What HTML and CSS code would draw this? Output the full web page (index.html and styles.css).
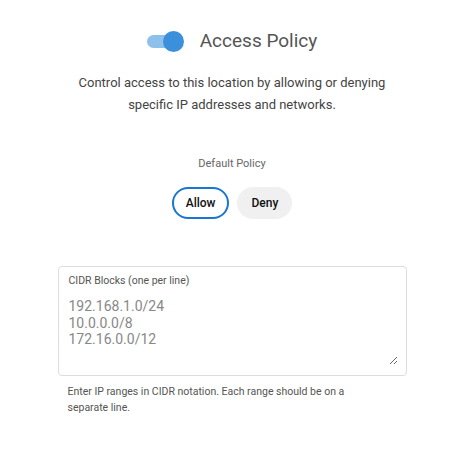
FILE: index.html
```html
<!DOCTYPE html>
<html>
<head>
<meta charset="utf-8">
<link rel="stylesheet" href="styles.css">
</head>
<body>
<div class="page">
  <div class="header">
    <span class="switch"><span class="track"></span><span class="thumb"></span></span>
    <h1 class="title">Access Policy</h1>
  </div>
  <p class="desc">Control access to this location by allowing or denying specific IP addresses and networks.</p>
  <div class="policy-label">Default Policy</div>
  <div class="btns">
    <button class="btn btn-active">Allow</button>
    <button class="btn">Deny</button>
  </div>
  <div class="field-wrap">
    <div class="field">
      <label class="field-label" for="cidr">CIDR Blocks (one per line)</label>
      <textarea id="cidr" class="area" rows="4">192.168.1.0/24
10.0.0.0/8
172.16.0.0/12</textarea>
    </div>
    <p class="help">Enter IP ranges in CIDR notation. Each range should be on a separate line.</p>
  </div>
</div>
</body>
</html>
```
FILE: styles.css
```css
html, body {
  margin: 0;
  background: #fff;
}
body {
  font-family: Roboto, "Liberation Sans", sans-serif;
}
.page {
  width: 464px;
  display: flex;
  flex-direction: column;
  align-items: center;
  padding-top: 28px;
}
.header {
  display: flex;
  align-items: center;
  gap: 16px;
  height: 26px;
}
.switch {
  position: relative;
  width: 37px;
  height: 21px;
  display: block;
}
.track {
  position: absolute;
  left: 0;
  top: 4px;
  width: 34px;
  height: 13px;
  border-radius: 7px;
  background: #8ec0ec;
}
.thumb {
  position: absolute;
  left: 16px;
  top: 0;
  width: 21px;
  height: 21px;
  border-radius: 50%;
  background: #3b8fdb;
}
.title {
  margin: 0;
  font-size: 19px;
  font-weight: 400;
  color: #555;
  line-height: 26px;
}
.desc {
  margin: 18px 0 0;
  width: 340px;
  text-align: center;
  font-size: 13px;
  line-height: 22px;
  color: #444;
}
.policy-label {
  margin-top: 41px;
  font-size: 11px;
  line-height: 14px;
  color: #666;
}
.btns {
  margin-top: 16px;
  display: flex;
  gap: 8px;
}
.btn {
  font-family: Roboto, "Liberation Sans", sans-serif;
  font-size: 12px;
  font-weight: 500;
  color: #111;
  height: 32px;
  padding: 0 12px;
  border: 2px solid transparent;
  border-radius: 16px;
  background: #f0f0f0;
}
.btn-active {
  background: #fff;
  border-color: #1976d2;
}
.field-wrap {
  margin-top: 47px;
  width: 349px;
}
.field {
  border: 1px solid #ddd;
  border-radius: 4px;
  padding: 8px 8px 10px 10px;
}
.field-label {
  display: block;
  font-size: 10.5px;
  line-height: 12px;
  color: #555;
}
.area {
  display: block;
  width: 100%;
  box-sizing: border-box;
  margin-top: 11px;
  padding: 0;
  border: none;
  outline: none;
  font-family: Roboto, "Liberation Sans", sans-serif;
  font-size: 14px;
  line-height: 16.5px;
  color: #888;
  height: 67px;
  background: transparent;
}
.help {
  margin: 8px 0 0;
  padding: 0 60px 0 10px;
  font-size: 10.5px;
  line-height: 16px;
  color: #555;
}
```
